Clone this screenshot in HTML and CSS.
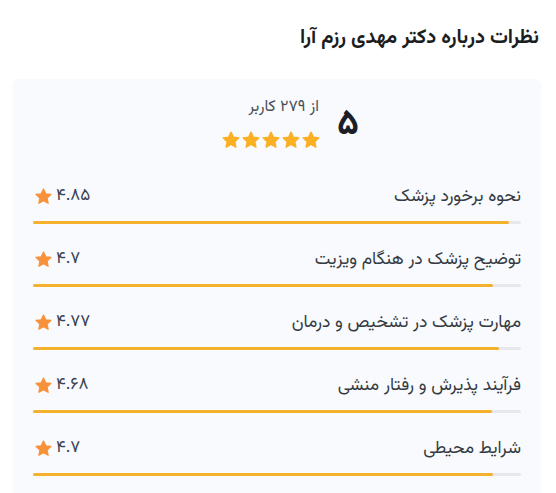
FILE: index.html
```html
<!DOCTYPE html>
<html lang="fa" dir="rtl">
<head>
<meta charset="utf-8">
<link rel="stylesheet" href="styles.css">
</head>
<body>
<div class="page">
  <h2 class="title">نظرات درباره دکتر مهدی رزم آرا</h2>
  <div class="card">
    <div class="summary">
      <div class="score">۵</div>
      <div class="summary-info">
        <div class="count">از ۲۷۹ کاربر</div>
        <div class="stars">
          <svg viewBox="0 0 24 24"><path d="M12 2.5l2.9 6.1 6.6.8-4.9 4.6 1.3 6.6L12 17.3l-5.9 3.3 1.3-6.6-4.9-4.6 6.6-.8z"/></svg>
          <svg viewBox="0 0 24 24"><path d="M12 2.5l2.9 6.1 6.6.8-4.9 4.6 1.3 6.6L12 17.3l-5.9 3.3 1.3-6.6-4.9-4.6 6.6-.8z"/></svg>
          <svg viewBox="0 0 24 24"><path d="M12 2.5l2.9 6.1 6.6.8-4.9 4.6 1.3 6.6L12 17.3l-5.9 3.3 1.3-6.6-4.9-4.6 6.6-.8z"/></svg>
          <svg viewBox="0 0 24 24"><path d="M12 2.5l2.9 6.1 6.6.8-4.9 4.6 1.3 6.6L12 17.3l-5.9 3.3 1.3-6.6-4.9-4.6 6.6-.8z"/></svg>
          <svg viewBox="0 0 24 24"><path d="M12 2.5l2.9 6.1 6.6.8-4.9 4.6 1.3 6.6L12 17.3l-5.9 3.3 1.3-6.6-4.9-4.6 6.6-.8z"/></svg>
        </div>
      </div>
    </div>

    <div class="item">
      <div class="item-head">
        <span class="label">نحوه برخورد پزشک</span>
        <span class="rating"><span class="num">۴.۸۵</span><svg class="star" viewBox="0 0 24 24"><path d="M12 2.5l2.9 6.1 6.6.8-4.9 4.6 1.3 6.6L12 17.3l-5.9 3.3 1.3-6.6-4.9-4.6 6.6-.8z"/></svg></span>
      </div>
      <div class="track"><div class="fill" style="width:97.5%"></div></div>
    </div>

    <div class="item">
      <div class="item-head">
        <span class="label">توضیح پزشک در هنگام ویزیت</span>
        <span class="rating"><span class="num">۴.۷</span><svg class="star" viewBox="0 0 24 24"><path d="M12 2.5l2.9 6.1 6.6.8-4.9 4.6 1.3 6.6L12 17.3l-5.9 3.3 1.3-6.6-4.9-4.6 6.6-.8z"/></svg></span>
      </div>
      <div class="track"><div class="fill" style="width:94.3%"></div></div>
    </div>

    <div class="item">
      <div class="item-head">
        <span class="label">مهارت پزشک در تشخیص و درمان</span>
        <span class="rating"><span class="num">۴.۷۷</span><svg class="star" viewBox="0 0 24 24"><path d="M12 2.5l2.9 6.1 6.6.8-4.9 4.6 1.3 6.6L12 17.3l-5.9 3.3 1.3-6.6-4.9-4.6 6.6-.8z"/></svg></span>
      </div>
      <div class="track"><div class="fill" style="width:95.5%"></div></div>
    </div>

    <div class="item">
      <div class="item-head">
        <span class="label">فرآیند پذیرش و رفتار منشی</span>
        <span class="rating"><span class="num">۴.۶۸</span><svg class="star" viewBox="0 0 24 24"><path d="M12 2.5l2.9 6.1 6.6.8-4.9 4.6 1.3 6.6L12 17.3l-5.9 3.3 1.3-6.6-4.9-4.6 6.6-.8z"/></svg></span>
      </div>
      <div class="track"><div class="fill" style="width:94%"></div></div>
    </div>

    <div class="item">
      <div class="item-head">
        <span class="label">شرایط محیطی</span>
        <span class="rating"><span class="num">۴.۷</span><svg class="star" viewBox="0 0 24 24"><path d="M12 2.5l2.9 6.1 6.6.8-4.9 4.6 1.3 6.6L12 17.3l-5.9 3.3 1.3-6.6-4.9-4.6 6.6-.8z"/></svg></span>
      </div>
      <div class="track"><div class="fill" style="width:94.3%"></div></div>
    </div>
  </div>
</div>
</body>
</html>
```

FILE: styles.css
```css
html, body {
  margin: 0;
  padding: 0;
  background: #ffffff;
}
body {
  font-family: "Vazirmatn", "Noto Sans Arabic", "DejaVu Sans", sans-serif;
  color: #333a44;
}
.page {
  padding: 26px 15px 0 13px;
}
.title {
  margin: 0;
  padding-right: 2px;
  font-size: 20px;
  font-weight: bold;
  color: #1b1d21;
  line-height: 24px;
}
.card {
  margin-top: 29px;
  background: #f8fafd;
  border-radius: 6px 6px 0 0;
  padding: 20px 20px 17px 20px;
}
.summary {
  display: flex;
  align-items: center;
  justify-content: center;
  gap: 16px;
  padding-left: 26px;
}
.score {
  font-size: 36px;
  font-weight: bold;
  color: #1c1f2a;
  line-height: 40px;
}
.summary-info {
  display: flex;
  flex-direction: column;
  align-items: flex-start;
  gap: 13px;
}
.count {
  font-size: 16px;
  color: #4a4f57;
  line-height: 18px;
  padding-right: 2px;
}
.stars {
  display: flex;
  gap: 0;
}
.stars svg {
  width: 20px;
  height: 20px;
  fill: #fbb024;
  stroke: #fbb024;
  stroke-width: 1.6;
  stroke-linejoin: round;
}
.item {
  margin-top: 23px;
}
.summary + .item {
  margin-top: 34px;
}
.item-head {
  display: flex;
  justify-content: space-between;
  align-items: center;
  height: 24px;
}
.label {
  font-size: 17.5px;
  color: #353a42;
}
.rating {
  display: flex;
  align-items: center;
  gap: 3px;
  padding-left: 1px;
}
.num {
  font-size: 17px;
  letter-spacing: 2px;
  color: #3a4150;
}
.star {
  width: 19px;
  height: 19px;
  fill: #f7923a;
  stroke: #f7923a;
  stroke-width: 1.5;
  stroke-linejoin: round;
}
.track {
  direction: ltr;
  margin-top: 13px;
  height: 3px;
  background: #e6e8ec;
  border-radius: 2px;
}
.fill {
  height: 100%;
  background: #f3b12e;
  border-radius: 2px;
}
```
